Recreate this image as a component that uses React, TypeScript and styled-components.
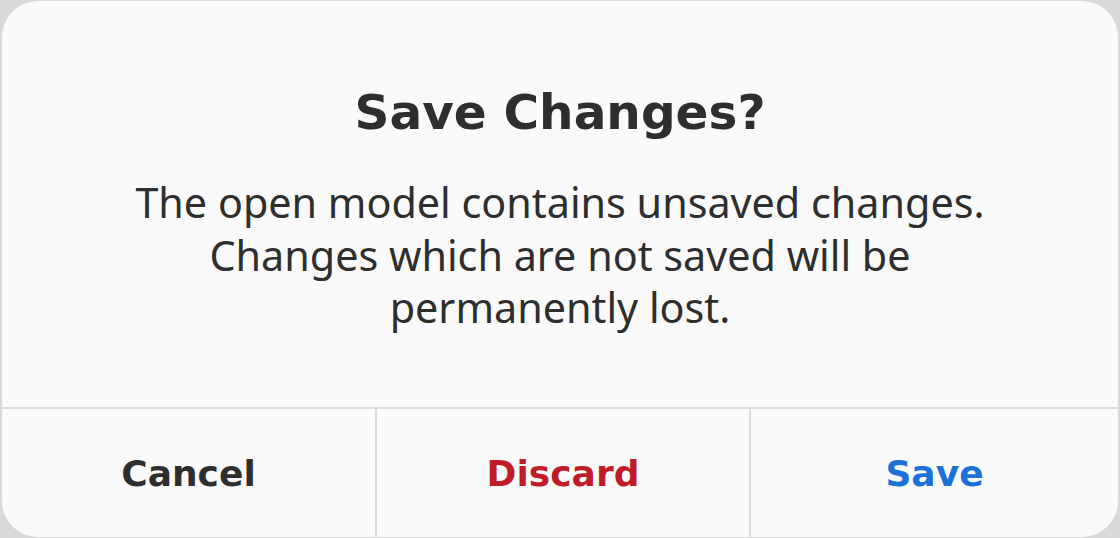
import styled, { createGlobalStyle } from 'styled-components'

const GlobalStyle = createGlobalStyle`
  html, body {
    margin: 0;
    padding: 0;
    background: #d9d9d9;
  }
  body {
    font-family: "Noto Sans", "Open Sans", sans-serif;
    -webkit-font-smoothing: antialiased;
  }
`

type Tone = 'default' | 'destructive' | 'suggested'

const toneColor: Record<Tone, string> = {
  default: '#2e2e2e',
  destructive: '#c01c28',
  suggested: '#1c71d8',
}

function App() {
  return (
    <>
      <GlobalStyle />
      <Dialog>
        <Content>
          <Heading>Save Changes?</Heading>
          <Body>
            The open model contains unsaved changes.
            <br />
            Changes which are not saved will be
            <br />
            permanently lost.
          </Body>
        </Content>
        <Responses>
          <Response $tone="default">Cancel</Response>
          <Response $tone="destructive">Discard</Response>
          <Response $tone="suggested">Save</Response>
        </Responses>
      </Dialog>
    </>
  )
}

export default App

const Dialog = styled.div`
  margin: 1px 2px;
  height: 536px;
  box-sizing: border-box;
  background: #fafafa;
  border-radius: 36px;
  overflow: hidden;
  display: flex;
  flex-direction: column;
`

const Content = styled.div`
  flex: 1;
  display: flex;
  flex-direction: column;
  align-items: center;
  padding: 82px 40px 0;
`

const Heading = styled.h1`
  margin: 0;
  font-family: "DejaVu Sans", "Noto Sans", sans-serif;
  font-size: 48.5px;
  line-height: 58px;
  font-weight: 700;
  color: #2e2e2e;
`

const Body = styled.p`
  margin: 35px 0 0;
  font-size: 41.3px;
  line-height: 52.5px;
  font-weight: 400;
  color: #2e2e2e;
  text-align: center;
  white-space: nowrap;
`

const Responses = styled.div`
  height: 128px;
  border-top: 2px solid #dcdcdc;
  display: grid;
  grid-template-columns: 373px 374px 1fr;
`

const Response = styled.button<{ $tone: Tone }>`
  border: none;
  background: transparent;
  font-family: "DejaVu Sans", "Noto Sans", sans-serif;
  font-size: 36px;
  font-weight: 700;
  color: ${(p) => toneColor[p.$tone]};
  padding: 0;
  & + & {
    border-left: 2px solid #dcdcdc;
  }
`
